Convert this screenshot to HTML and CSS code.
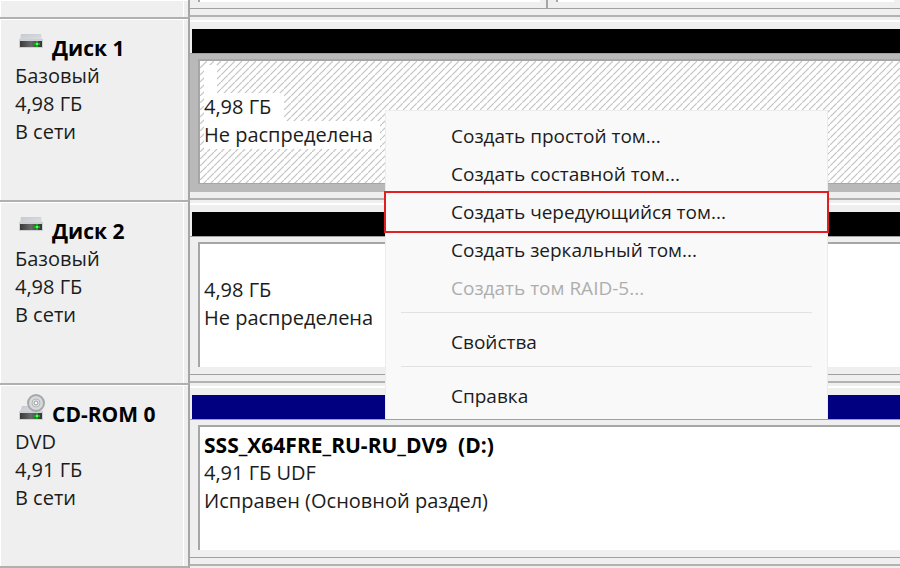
FILE: index.html
```html
<!DOCTYPE html>
<html lang="ru">
<head>
<meta charset="utf-8">
<title>Управление дисками</title>
<link rel="stylesheet" href="styles.css">
</head>
<body>
<svg class="defs" aria-hidden="true">
  <defs>
    <linearGradient id="top" x1="0" y1="0" x2="1" y2="1"><stop offset="0" stop-color="#c6cace"/><stop offset="1" stop-color="#dcdfe4"/></linearGradient>
    <linearGradient id="front" x1="0" y1="0" x2="1" y2="0"><stop offset="0" stop-color="#3a3a3a"/><stop offset=".5" stop-color="#6a6a6a"/><stop offset="1" stop-color="#2c3a2c"/></linearGradient>
    <symbol id="drive" viewBox="0 0 26 28">
      <path d="M2 6h20l1 6H1z" fill="url(#top)"/>
      <path d="M0 11h24v9H0z" fill="#cdd1d5"/>
      <path d="M1 13h22v6H1z" fill="url(#front)"/>
      <path d="M15 16h6M18 13v6" stroke="#0fae1c" stroke-width="2"/>
      <path d="M17 15h2v2h-2z" fill="#5cff5c"/>
    </symbol>
    <symbol id="cdrom" viewBox="0 0 26 28">
      <path d="M3 12h19l1 6H1z" fill="url(#top)"/>
      <path d="M0 17h24v9H0z" fill="#cdd1d5"/>
      <circle cx="17" cy="9" r="8" fill="#d5d9da" stroke="#a4a8aa" stroke-width="2"/>
      <circle cx="17" cy="9" r="4" fill="#e6eaea" stroke="#b0b5b7" stroke-width="1"/>
      <circle cx="17" cy="9" r="2" fill="#fff" stroke="#8f9496" stroke-width="1"/>
      <path d="M1 19h22v6H1z" fill="url(#front)"/>
      <path d="M15 22h6M18 19v6" stroke="#0fae1c" stroke-width="2"/>
      <path d="M17 21h2v2h-2z" fill="#5cff5c"/>
    </symbol>
  </defs>
</svg>
<main class="disks">
  <section class="disk disk-previous">
    <div class="info"></div>
    <div class="graph">
      <div class="volumes">
        <div class="volume"><div class="box"></div></div>
        <div class="volume"><div class="box"></div></div>
      </div>
    </div>
  </section>
  <section class="disk">
    <div class="info">
      <h2><svg class="icon"><use href="#drive"/></svg>Диск 1</h2>
      <p>Базовый</p><p>4,98 ГБ</p><p>В сети</p>
    </div>
    <div class="graph">
      <div class="bar"></div>
      <div class="volume selected"><div class="box">
        <p><span class="blank"></span></p><p><span>4,98 ГБ</span></p><p><span class="state">Не распределена</span></p>
      </div></div>
    </div>
  </section>
  <section class="disk">
    <div class="info">
      <h2><svg class="icon"><use href="#drive"/></svg>Диск 2</h2>
      <p>Базовый</p><p>4,98 ГБ</p><p>В сети</p>
    </div>
    <div class="graph">
      <div class="bar"></div>
      <div class="volume"><div class="box">
        <p></p><p>4,98 ГБ</p><p>Не распределена</p>
      </div></div>
    </div>
  </section>
  <section class="disk">
    <div class="info">
      <h2><svg class="icon"><use href="#cdrom"/></svg>CD-ROM 0</h2>
      <p>DVD</p><p>4,91 ГБ</p><p>В сети</p>
    </div>
    <div class="graph">
      <div class="bar primary"></div>
      <div class="volume"><div class="box">
        <p class="name">SSS_X64FRE_RU-RU_DV9&nbsp; (D:)</p><p>4,91 ГБ UDF</p><p>Исправен (Основной раздел)</p>
      </div></div>
    </div>
  </section>
  <section class="disk disk-next"><div class="info"></div><div class="graph"></div></section>
</main>
<div class="menu" role="menu">
  <button type="button" role="menuitem">Создать простой том...</button>
  <button type="button" role="menuitem">Создать составной том...</button>
  <button type="button" role="menuitem" class="marked">Создать чередующийся том...</button>
  <button type="button" role="menuitem">Создать зеркальный том...</button>
  <button type="button" role="menuitem" disabled>Создать том RAID-5...</button>
  <hr>
  <button type="button" role="menuitem">Свойства</button>
  <hr>
  <button type="button" role="menuitem">Справка</button>
</div>
</body>
</html>
```
FILE: styles.css
```css
* { box-sizing: border-box; }
body {
  margin: 0;
  background: #efefef;
  color: #1c1c1c;
  font: 20px/28px "Open Sans", "Noto Sans", sans-serif;
  overflow: hidden;
}
h2, p { margin: 0; }
.defs { position: absolute; width: 0; height: 0; }

.disk {
  display: grid;
  grid-template-columns: 190px 1fr;
}
.info {
  padding: 15px 0 0 15px;
  border-top: 2px solid #b0b0b0;
  border-right: 2px solid #a6a6a6;
  box-shadow: inset 1px 1px #fff, inset -4px 0 #efefef, inset -5px 0 #fff;
}
.info h2 {
  display: flex;
  gap: 7px;
  padding-left: 4px;
  color: #000;
  font-size: 21px;
  line-height: 28px;
}
.icon {
  width: 26px;
  height: 28px;
  margin-top: -6px;
}
.info p, .box p { min-height: 28px; white-space: nowrap; }

.graph {
  padding: 12px 0 6px;
  border-bottom: 2px solid #b2b2b2;
  background: linear-gradient(#fff, #fff) 0 3px / 100% 2px no-repeat;
}
.bar {
  height: 24px;
  margin-left: 2px;
  background: #000;
}
.bar.primary { background: #000080; }
.volume {
  padding: 5px 0 7px 8px;
  border-top: 1px solid #a0a0a0;
  border-bottom: 1px solid #a0a0a0;
}
.box {
  height: 125px;
  padding: 4px 0 0 4px;
  border-top: 2px solid #a6a6a6;
  border-left: 2px solid #a6a6a6;
  background: #fff;
}
.name { color: #000; font-size: 21px; font-weight: 700; }

.selected {
  background: #b9b9b9;
  border-bottom-color: #b9b9b9;
}
.selected .box {
  background: linear-gradient(135deg, #fff 40%, #c6c6c6 48% 52%, #fff 60%) 0 0 / 7px 7px;
  border-bottom: 1px solid #a6a6a6;
}
.selected span {
  display: inline-block;
  height: 28px;
  padding-right: 13px;
  background: #fff;
  vertical-align: top;
}
.selected .state { padding-right: 7px; }

.disk-previous .info { border-top: 0; }
.disk-previous .graph { padding: 0 0 6px; background: none; }
.disk-previous .volumes { display: grid; grid-template-columns: 358px 1fr; }
.disk-previous .volume { padding: 0 6px 6px 8px; border-top: 0; }
.disk-previous .volume:first-child { border-right: 2px solid #a6a6a6; }
.disk-previous .box { height: 2px; padding: 0; border-top: 0; }
.disk-next .info, .disk-next .graph { min-height: 8px; padding: 0; border-bottom: 0; }

.menu {
  position: absolute;
  top: 110px;
  left: 385px;
  width: 443px;
  padding: 6px 0 4px;
  border: 1px solid #ececec;
  border-bottom: 0;
  background: #f9f9f9;
  font-size: 19px;
}
.menu button {
  display: block;
  width: 100%;
  height: 38px;
  padding: 0 0 0 65px;
  border: 0;
  background: none;
  color: #1c1c1c;
  font: inherit;
  text-align: left;
}
.menu button:disabled { color: #aeaeae; }
.menu .marked { outline: 2px solid #e02020; }
.menu hr {
  height: 1px;
  margin: 5px 15px 10px;
  border: 0;
  background: #e2e2e2;
}
```
